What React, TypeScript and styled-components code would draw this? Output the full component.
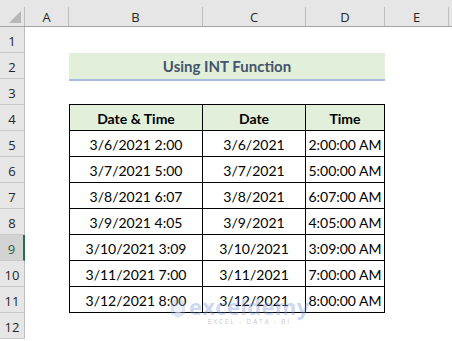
import React from 'react';
import styled, { createGlobalStyle } from 'styled-components';

const GlobalStyle = createGlobalStyle`
    html, body {
        margin: 0;
        padding: 0;
        background: #ffffff;
    }
    * {
        box-sizing: border-box;
    }
`;

const COLS = [
    { key: 'A', width: 44 },
    { key: 'B', width: 134 },
    { key: 'C', width: 103 },
    { key: 'D', width: 79 },
    { key: 'E', width: 64 },
];

const TABLE_ROWS = [
    ['3/6/2021 2:00', '3/6/2021', '2:00:00 AM'],
    ['3/7/2021 5:00', '3/7/2021', '5:00:00 AM'],
    ['3/8/2021 6:07', '3/8/2021', '6:07:00 AM'],
    ['3/9/2021 4:05', '3/9/2021', '4:05:00 AM'],
    ['3/10/2021 3:09', '3/10/2021', '3:09:00 AM'],
    ['3/11/2021 7:00', '3/11/2021', '7:00:00 AM'],
    ['3/12/2021 8:00', '3/12/2021', '8:00:00 AM'],
];

const SELECTED_ROW = 9;

const Sheet = styled.div`
    position: relative;
    width: 452px;
    height: 341px;
    overflow: hidden;
    background: #ffffff;
    display: flex;
    flex-direction: column;
    font-family: Lato, 'Liberation Sans', sans-serif;
`;

const HeaderBar = styled.div`
    display: flex;
    height: 27px;
    flex: none;
    background: #e6e6e6;
    border-bottom: 1px solid #a5a5a5;
`;

const Corner = styled.div`
    position: relative;
    width: 25px;
    height: 19px;
    align-self: flex-end;
    border-right: 1px solid #bdbdbd;
`;

const CornerTriangle = styled.div`
    position: absolute;
    right: 3px;
    bottom: 3px;
    width: 0;
    height: 0;
    border-left: 12px solid transparent;
    border-bottom: 12px solid #b7b7b7;
`;

const ColHead = styled.div<{ $w: number }>`
    width: ${p => p.$w}px;
    height: 19px;
    align-self: flex-end;
    flex: none;
    display: flex;
    align-items: center;
    justify-content: center;
    border-right: 1px solid #bdbdbd;
    font-family: 'Open Sans', 'Liberation Sans', sans-serif;
    font-size: 13px;
    color: #262626;
`;

const Row = styled.div`
    display: flex;
    height: 26px;
    flex: none;
`;

const RowHead = styled.div<{ $selected?: boolean }>`
    width: 25px;
    flex: none;
    display: flex;
    align-items: center;
    justify-content: center;
    padding-top: 2px;
    background: ${p => (p.$selected ? '#d3d3d3' : '#e6e6e6')};
    border-right: ${p => (p.$selected ? '2px solid #217346' : '1px solid #bdbdbd')};
    border-bottom: 1px solid #c8c8c8;
    font-family: 'Open Sans', 'Liberation Sans', sans-serif;
    font-size: 13px;
    color: ${p => (p.$selected ? '#1f5f3b' : '#262626')};
`;

const Cell = styled.div<{
    $w: number;
    $table?: boolean;
    $first?: boolean;
    $top?: boolean;
    $head?: boolean;
}>`
    width: ${p => p.$w}px;
    flex: none;
    display: flex;
    align-items: center;
    justify-content: center;
    padding-top: 2px;
    font-size: 14px;
    color: #000000;
    white-space: nowrap;
    font-weight: ${p => (p.$head ? 700 : 400)};
    background: ${p => (p.$head ? '#e2efda' : 'transparent')};
    border-right: ${p => (p.$table ? '1px solid #000' : 'none')};
    border-bottom: ${p => (p.$table ? '1px solid #000' : 'none')};
    border-left: ${p => (p.$first ? '1px solid #000' : 'none')};
    border-top: ${p => (p.$top ? '1px solid #000' : 'none')};
    margin-top: ${p => (p.$top ? '-1px' : '0')};
    height: ${p => (p.$top ? '27px' : 'auto')};
`;

const TitleCell = styled.div`
    width: 316px;
    height: 28px;
    flex: none;
    display: flex;
    align-items: center;
    justify-content: center;
    background: #e2efda;
    border-bottom: 2px solid #a9bce0;
    font-size: 15px;
    font-weight: 700;
    color: #44546a;
`;

const Watermark = styled.div`
    position: absolute;
    left: 170px;
    top: 297px;
    display: flex;
    align-items: flex-start;
    gap: 3px;
    pointer-events: none;
`;

const WatermarkText = styled.div`
    display: flex;
    flex-direction: column;
    align-items: center;
    line-height: 1;
`;

const BrandName = styled.span`
    font-family: 'Open Sans', 'Liberation Sans', sans-serif;
    font-size: 22px;
    font-weight: 700;
    line-height: 18px;
    letter-spacing: 0.3px;
    color: rgba(120, 150, 220, 0.38);
`;

const BrandTag = styled.span`
    margin-top: 3px;
    font-family: 'Open Sans', 'Liberation Sans', sans-serif;
    font-size: 7px;
    line-height: 7px;
    letter-spacing: 1.6px;
    color: rgba(140, 150, 170, 0.5);
`;

const LogoMark = () => (
    <svg width="16" height="22" viewBox="0 0 16 22">
        <path d="M8 1 L15 5 L15 17 L8 21 L1 17 L1 5 Z" fill="rgba(150,170,220,0.32)" />
        <path d="M8 7 L12 9.5 L12 14.5 L8 17 L4 14.5 L4 9.5 Z" fill="rgba(255,255,255,0.5)" />
    </svg>
);

const blankCells = (cols: typeof COLS) => cols.map(c => <Cell key={c.key} $w={c.width} />);

export default function App() {
    const rows: React.ReactNode[] = [];

    for (let n = 1; n <= 12; n++) {
        let content: React.ReactNode;
        if (n === 2) {
            content = (
                <>
                    <Cell $w={44} />
                    <TitleCell>Using INT Function</TitleCell>
                    <Cell $w={64} />
                </>
            );
        } else if (n === 4) {
            content = (
                <>
                    <Cell $w={44} />
                    <Cell $w={134} $table $first $top $head>Date &amp; Time</Cell>
                    <Cell $w={103} $table $top $head>Date</Cell>
                    <Cell $w={79} $table $top $head>Time</Cell>
                    <Cell $w={64} />
                </>
            );
        } else if (n >= 5 && n <= 11) {
            const [dt, d, t] = TABLE_ROWS[n - 5];
            content = (
                <>
                    <Cell $w={44} />
                    <Cell $w={134} $table $first>{dt}</Cell>
                    <Cell $w={103} $table>{d}</Cell>
                    <Cell $w={79} $table>{t}</Cell>
                    <Cell $w={64} />
                </>
            );
        } else {
            content = blankCells(COLS);
        }
        rows.push(
            <Row key={n}>
                <RowHead $selected={n === SELECTED_ROW}>{n}</RowHead>
                {content}
            </Row>
        );
    }

    return (
        <>
            <GlobalStyle />
            <Sheet>
                <HeaderBar>
                    <Corner>
                        <CornerTriangle />
                    </Corner>
                    {COLS.map(c => (
                        <ColHead key={c.key} $w={c.width}>{c.key}</ColHead>
                    ))}
                </HeaderBar>
                {rows}
                <Watermark>
                    <LogoMark />
                    <WatermarkText>
                        <BrandName>exceldemy</BrandName>
                        <BrandTag>EXCEL - DATA - BI</BrandTag>
                    </WatermarkText>
                </Watermark>
            </Sheet>
        </>
    );
}
